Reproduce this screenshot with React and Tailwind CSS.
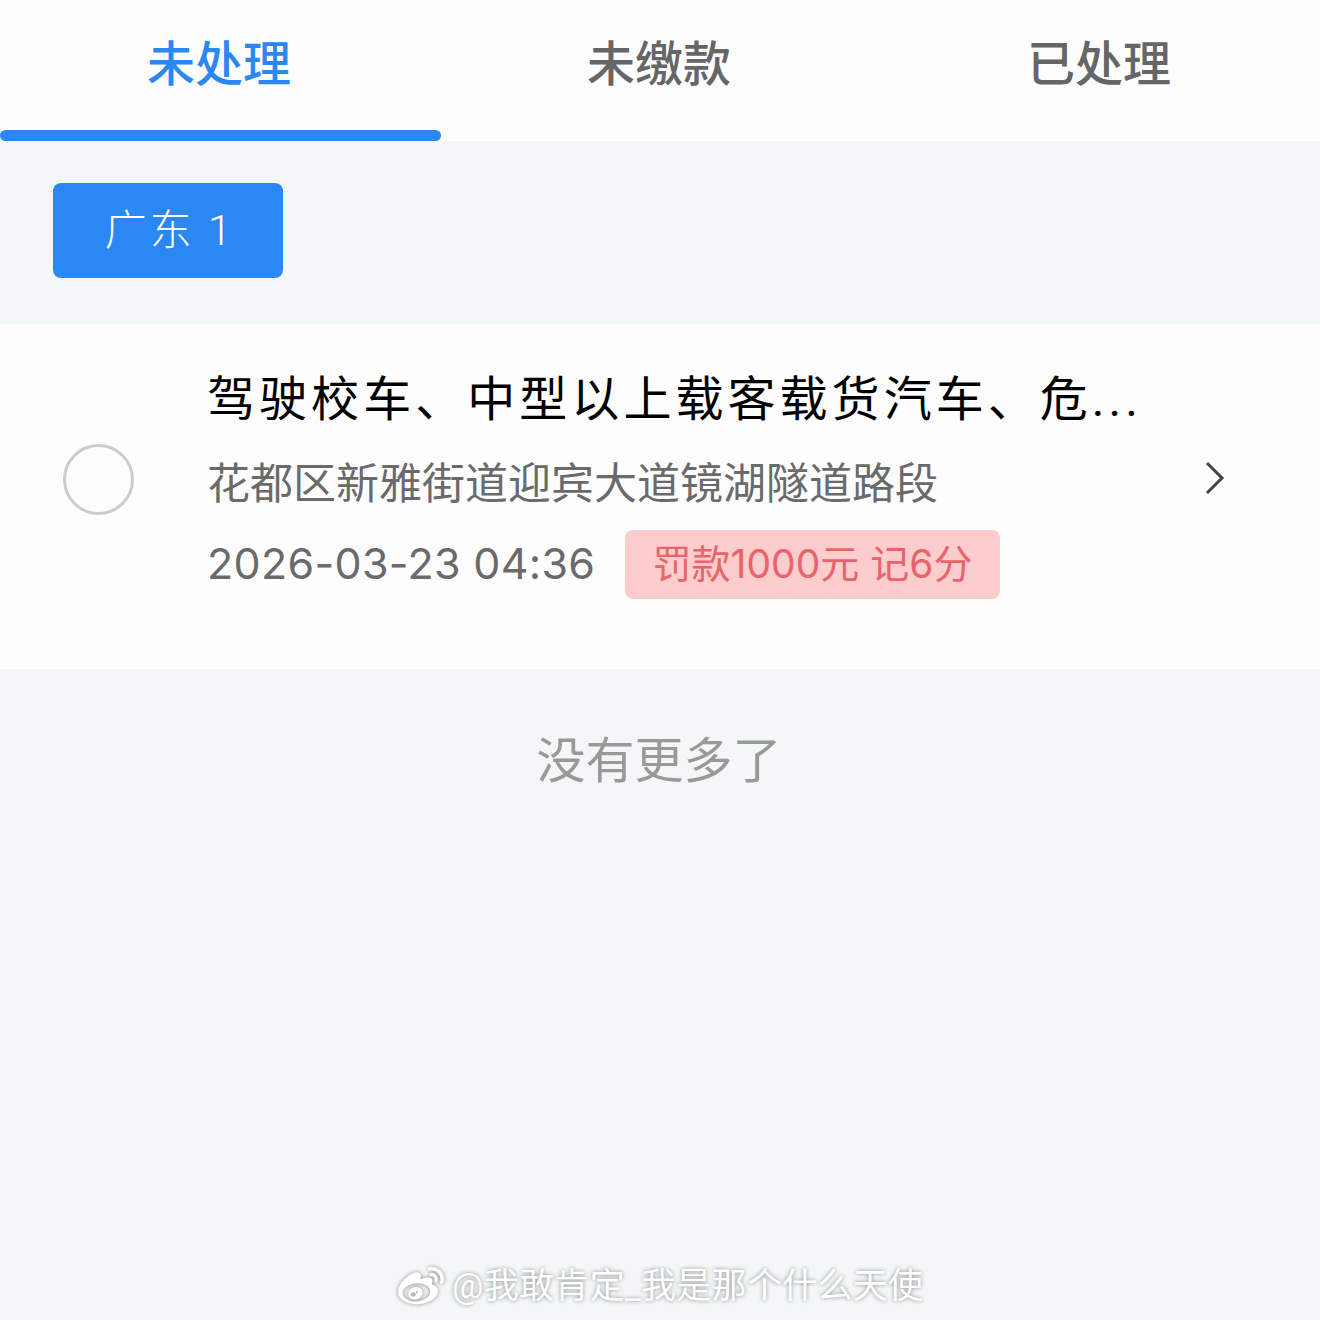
import React from "react";
import { FaWeibo } from "react-icons/fa";

const stack = "font-['Roboto','Noto_Sans_CJK_SC',sans-serif]";
const dateStack = "font-['Inter','Noto_Sans_CJK_SC',sans-serif]";

export default function App() {
  return (
    <div className={`relative h-[1320px] w-[1320px] overflow-hidden bg-[#f4f7f8] ${stack}`}>
      <div className="flex h-[141px] bg-[#fdfdfd]">
        <div className="relative flex w-[440px] justify-center pt-[32px] pr-[2px] text-[48px] leading-[66px] font-medium text-[#2b87f2]">
          未处理
          <div className="absolute bottom-0 left-0 h-[11px] w-[441px] rounded-full bg-[#2b87f2]" />
        </div>
        <div className="flex w-[440px] justify-center pt-[32px] pr-[2px] text-[48px] leading-[66px] font-medium text-[#666666]">未缴款</div>
        <div className="flex w-[440px] justify-center pt-[32px] pr-[2px] text-[48px] leading-[66px] font-medium text-[#666666]">已处理</div>
      </div>

      <div className="h-[183px] pt-[42px] pl-[53px]">
        <div className="flex h-[95px] w-[230px] items-center justify-center rounded-[8px] bg-[#2b87f2] pl-[3px] text-[42px] font-light tracking-[3px] text-white">
          广东 1
        </div>
      </div>

      <div className="flex items-center bg-[#fdfdfd] pt-[42px] pb-[70px] pl-[63px]">
        <div className="mb-[7px] h-[71px] w-[71px] shrink-0 rounded-full border-[3px] border-[#cccccc]" />
        <div className="ml-[73px] w-[960px]">
          <div className="pt-[2px] text-[48px] leading-[64px] tracking-[4.05px] text-black">驾驶校车、中型以上载客载货汽车、危...</div>
          <div className="mt-[22px] text-[43px] leading-[60px] text-[#6a6a6a]">花都区新雅街道迎宾大道镜湖隧道路段</div>
          <div className="mt-[16px] flex items-center">
            <span className={`mb-[4px] w-[418px] text-[43px] leading-[60px] tracking-[0.3px] text-[#6a6a6a] ${dateStack}`}>2026-03-23 04:36</span>
            <span className={`flex h-[69px] w-[375px] items-center justify-center rounded-[8px] bg-[#fdcccc] text-[39px] text-[#e8636b] ${dateStack}`}>
              罚款1000元 记6分
            </span>
          </div>
        </div>
        <svg className="mb-[9px] ml-[37px] shrink-0" width="22" height="34" viewBox="0 0 22 34" fill="none">
          <path d="M3 2 L18 17 L3 32" stroke="#444444" strokeWidth="3" />
        </svg>
      </div>

      <div className="pt-[60px] pr-[2px] text-center text-[49px] leading-[66px] text-[#999999]">没有更多了</div>

      <div className="absolute top-[1262px] left-[397px] flex h-[50px] items-center text-[35px] tracking-[0.3px] text-white [text-shadow:0_0_4px_rgba(0,0,0,0.45)]">
        <FaWeibo className="mr-[7px] h-[46px] w-[48px] text-white drop-shadow-[0_0_2px_rgba(0,0,0,0.45)]" />
        @我敢肯定_我是那个什么天使
      </div>
    </div>
  );
}
